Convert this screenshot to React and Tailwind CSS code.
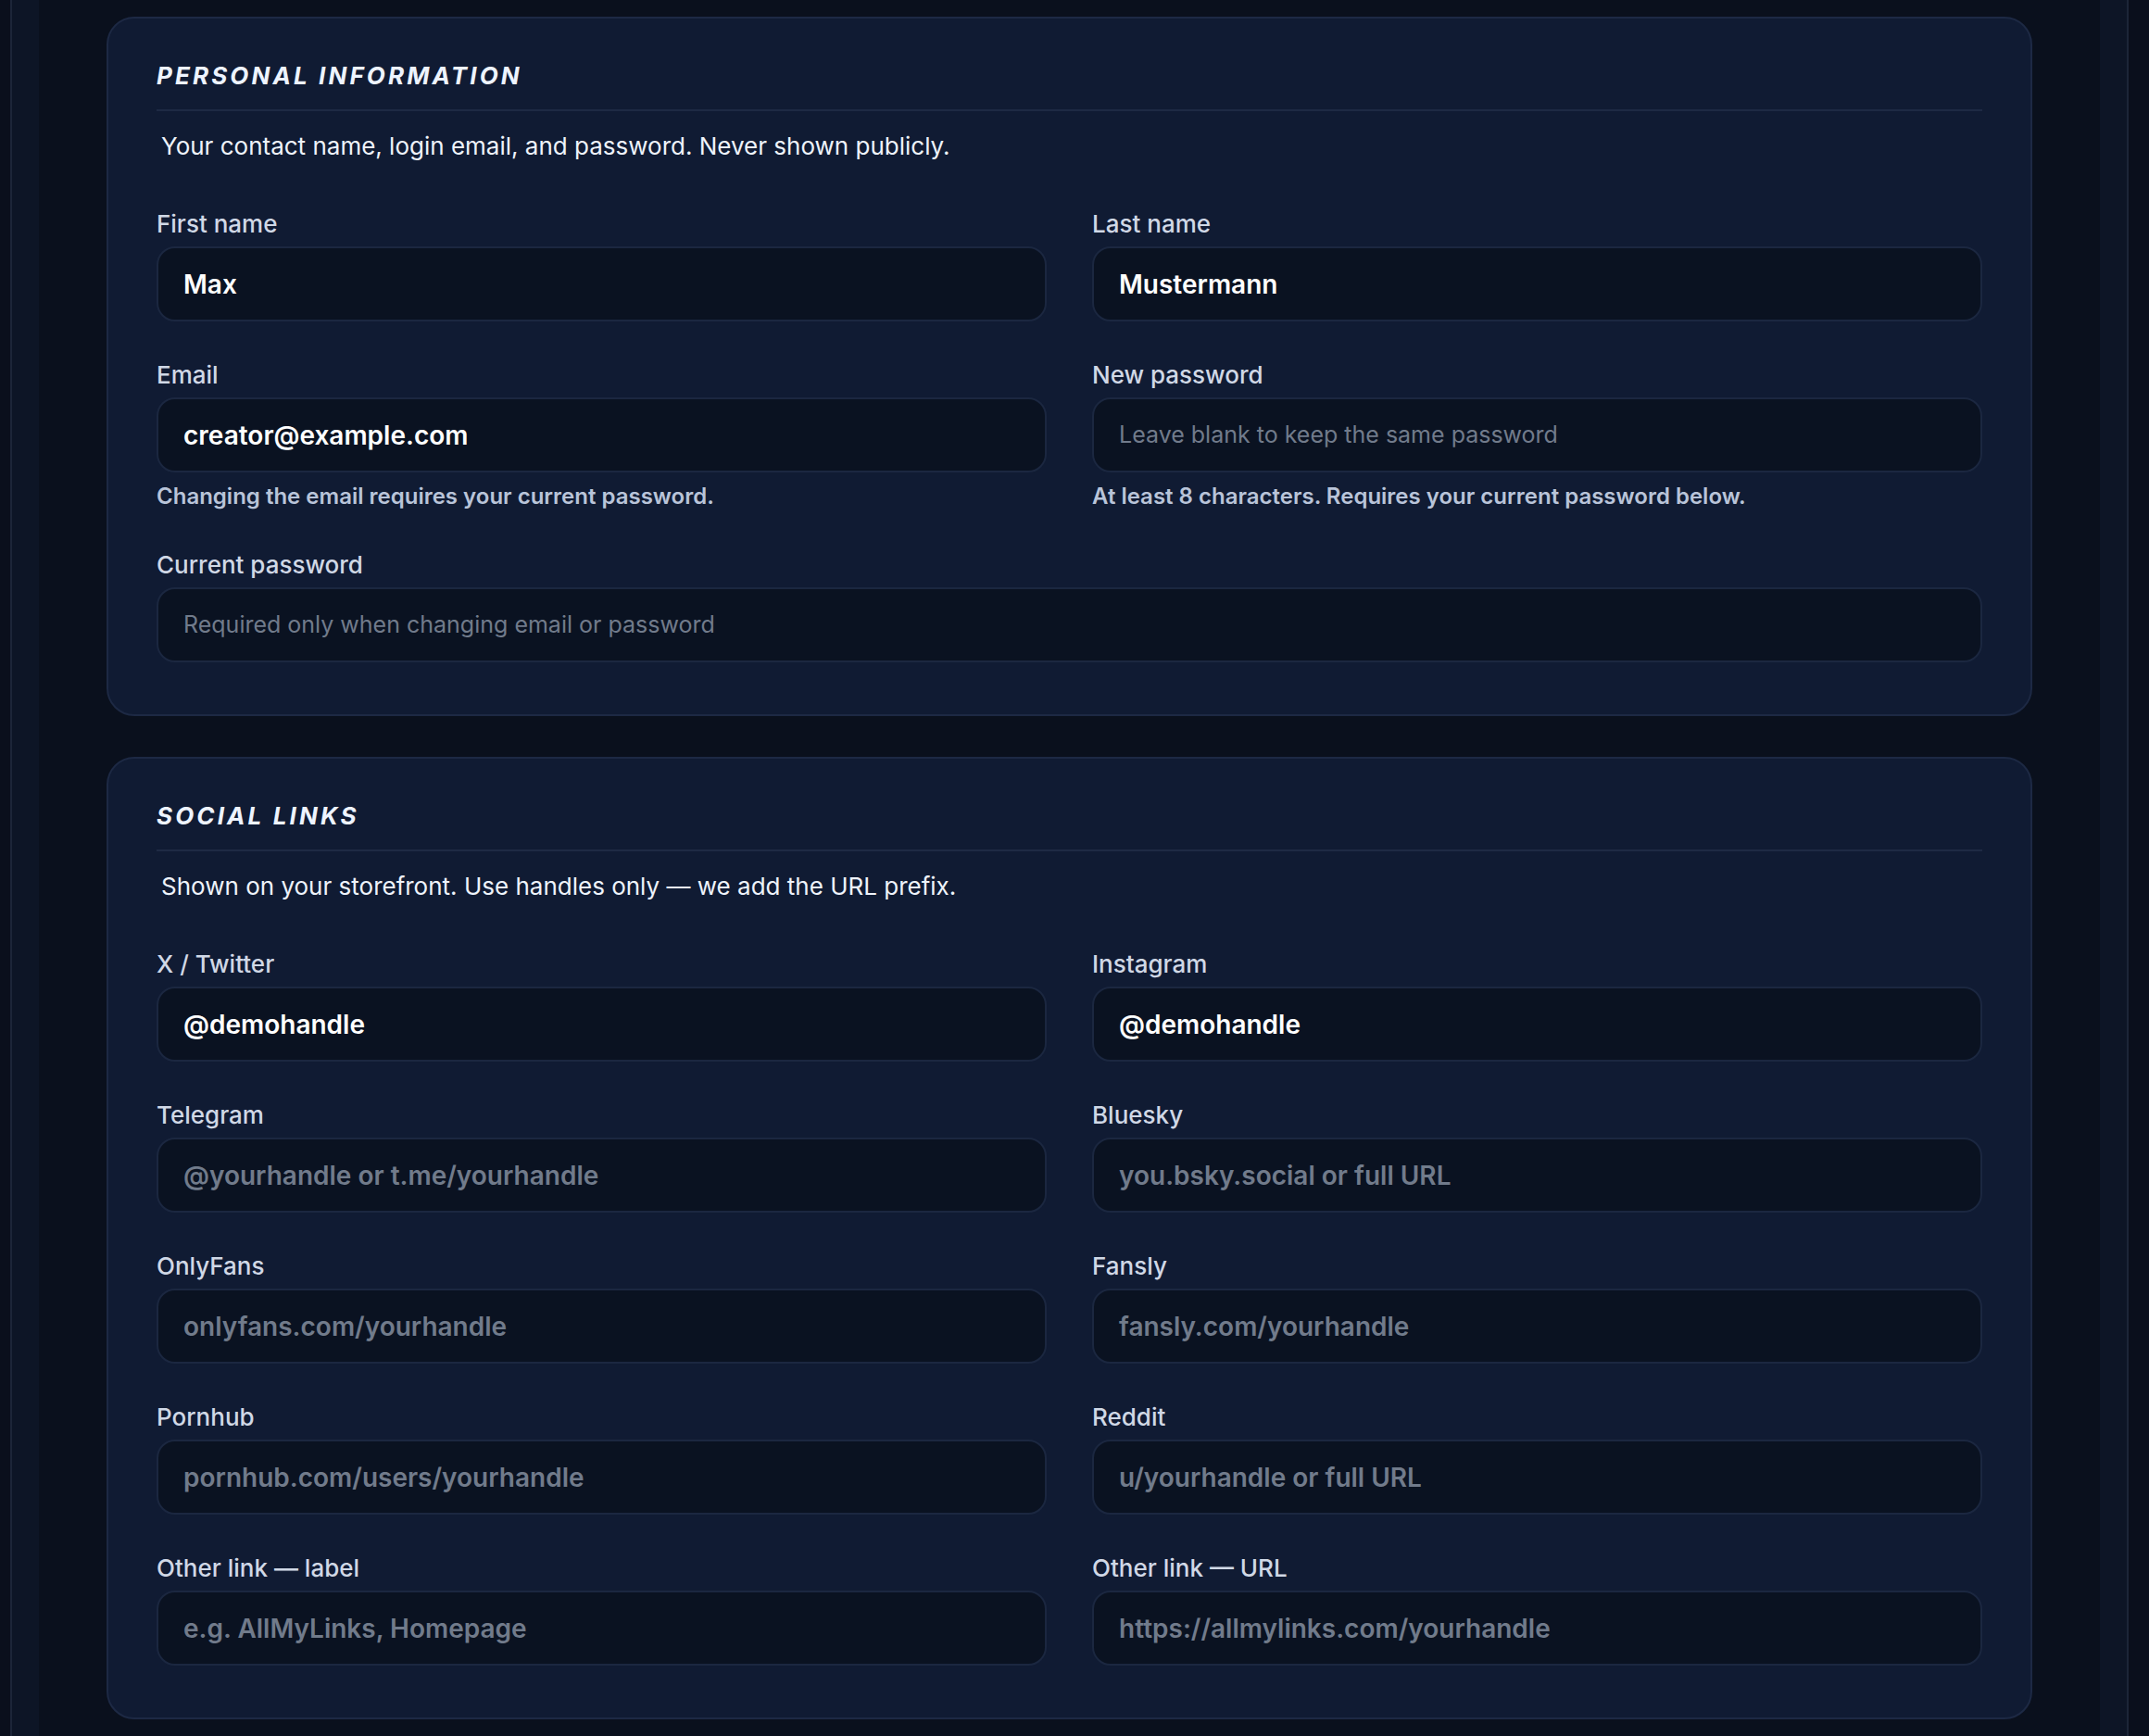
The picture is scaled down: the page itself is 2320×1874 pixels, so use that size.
import React from "react"

const FONT = { fontFamily: "Inter, 'Noto Sans', sans-serif" }

const boxCls =
  "mt-[6px] flex h-[81px] w-full items-center rounded-[20px] border-2 border-[#1b2740] bg-[#0a1221] pl-[27px] pr-6 outline-none"

function Field({ label, value, placeholder, help, bold = true, full = false }) {
  let tone = "text-[28px] font-semibold text-white"
  if (!value) tone = bold ? "text-[28px] font-semibold text-[#717b8b]" : "text-[25px] font-normal text-[#717b8b]"
  return (
    <div className={full ? "col-span-2" : ""}>
      <label className="block text-[26px] font-medium leading-[36px] text-[#d0d8e6]">{label}</label>
      <div className={`${boxCls} ${tone}`}>{value || placeholder}</div>
      {help && <p className="mt-[10px] text-[24px] font-semibold leading-[32px] text-[#b9c4d9]">{help}</p>}
    </div>
  )
}

function Section({ title, desc, children }) {
  return (
    <section className="rounded-[30px] border-2 border-[#1d2944] bg-[#101b33] px-[52px] pt-[44px] pb-[56px]">
      <div className="border-b-2 border-[#1e2a44] pb-[18px]">
        <h2 className="text-[26px] font-bold italic uppercase leading-[36px] tracking-[0.12em] text-[#eef4ff]">{title}</h2>
      </div>
      <p className="mt-[20px] pl-[5px] text-[26px] leading-[36px] text-[#eef3fb]">{desc}</p>
      <div className="mt-[48px] grid grid-cols-2 gap-x-[49px] gap-y-[40px]">{children}</div>
    </section>
  )
}

export default function App() {
  return (
    <div className="min-h-screen bg-[#0a0f1c]" style={FONT}>
      <div className="ml-[11px] mr-[22px] min-h-screen border-x-2 border-[#1c2538] bg-[#0d1526] px-[29px]">
        <div className="min-h-screen bg-[#0a101d] px-[73px] pt-[18px] pb-10">
          <div className="space-y-[44px]">
            <Section title="Personal information" desc="Your contact name, login email, and password. Never shown publicly.">
              <Field label="First name" value="Max" />
              <Field label="Last name" value="Mustermann" />
              <Field label="Email" value="creator@example.com" help="Changing the email requires your current password." />
              <Field
                label="New password"
                placeholder="Leave blank to keep the same password"
                bold={false}
                help="At least 8 characters. Requires your current password below."
              />
              <Field label="Current password" placeholder="Required only when changing email or password" bold={false} full />
            </Section>

            <Section title="Social links" desc="Shown on your storefront. Use handles only — we add the URL prefix.">
              <Field label="X / Twitter" value="@demohandle" />
              <Field label="Instagram" value="@demohandle" />
              <Field label="Telegram" placeholder="@yourhandle or t.me/yourhandle" />
              <Field label="Bluesky" placeholder="you.bsky.social or full URL" />
              <Field label="OnlyFans" placeholder="onlyfans.com/yourhandle" />
              <Field label="Fansly" placeholder="fansly.com/yourhandle" />
              <Field label="Pornhub" placeholder="pornhub.com/users/yourhandle" />
              <Field label="Reddit" placeholder="u/yourhandle or full URL" />
              <Field label="Other link — label" placeholder="e.g. AllMyLinks, Homepage" />
              <Field label="Other link — URL" placeholder="https://allmylinks.com/yourhandle" />
            </Section>
          </div>
        </div>
      </div>
    </div>
  )
}
